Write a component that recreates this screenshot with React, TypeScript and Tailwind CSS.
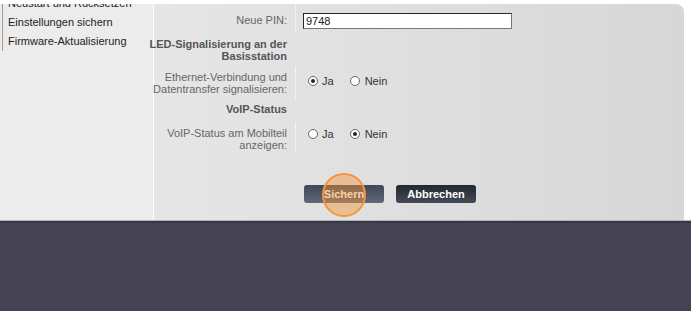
const menu = ["Neustart und Rücksetzen", "Einstellungen sichern", "Firmware-Aktualisierung"];

export default function App() {
  return <div className="h-[311px] w-[691px] overflow-hidden bg-white font-['Liberation_Sans',Arial,sans-serif] text-[11px]">
    <div className="pt-[4px] pr-[7px]">
      <div className="flex h-[216px] overflow-hidden rounded-tr-[8px]">
        <aside className="w-[153px] shrink-0 bg-[#ececec] pl-[2px]">
          <ul className="-mt-[10px] border-l border-[#9c9c9c] pl-[5px] text-[#222]">
            {menu.map((item) => <li key={item} className="h-[19px] leading-[19px]">{item}</li>)}
          </ul>
        </aside>
        <main className="flex-1 border-l border-white bg-linear-to-r from-[#e6e6e6] to-[#d7d7d7] pt-[1px]">
          <div className="flex h-[27px]">
            <Label className="items-start pt-[9px]">Neue PIN:</Label>
            <Value className="pt-[8px]"><input defaultValue="9748" className="h-[16px] w-[209px] border border-[#777] border-t-[#262626] border-l-[#262626] bg-white px-[2px] text-[11px] text-[#222] outline-none" /></Value>
          </div>
          <Heading className="mt-[6px]">LED-Signalisierung an der<br />Basisstation</Heading>
          <div className="mt-[4px] flex h-[33px]">
            <Label>Ethernet-Verbindung und<br />Datentransfer signalisieren:</Label>
            <Value className="flex items-center pb-[3px]"><Radios value="ja" /></Value>
          </div>
          <Heading className="mt-[4px]">VoIP-Status</Heading>
          <div className="mt-[7px] flex h-[30px]">
            <Label className="pt-[3px]">VoIP-Status am Mobilteil<br />anzeigen:</Label>
            <Value className="flex items-center pb-[6px]"><Radios value="nein" /></Value>
          </div>
          <div className="mt-[33px] flex gap-[12px] pl-[150px]">
            <button className="relative h-[18px] w-[80px] rounded-[3px] bg-linear-to-b from-[#3d4756] to-[#5f6b7b] text-[11px] font-bold text-white">
              Sichern
              <span className="absolute -top-[12px] left-[18px] h-[44px] w-[44px] rounded-full border-2 border-[#f7943a] bg-[#f7943a]/45" />
            </button>
            <button className="h-[18px] w-[80px] rounded-[3px] bg-linear-to-b from-[#232830] to-[#434b57] text-[11px] font-bold text-white">Abbrechen</button>
          </div>
        </main>
      </div>
    </div>
    <div className="h-[91px] border-t border-[#b3b3b3] bg-[#454353]">
      <div className="h-[2px] bg-[#383746]" />
    </div>
  </div>;
}

function Label({ children, className = "" }: { children: React.ReactNode; className?: string }) {
  return <div className={`flex w-[141px] shrink-0 items-center justify-end whitespace-nowrap pr-[8px] text-right leading-[12px] text-[#666] ${className}`}><div>{children}</div></div>;
}

function Value({ children, className = "" }: { children: React.ReactNode; className?: string }) {
  return <div className={`border-l border-[#f3f3f3] pl-[7px] ${className}`}>{children}</div>;
}

function Heading({ children, className = "" }: { children: React.ReactNode; className?: string }) {
  return <div className={`flex w-[141px] justify-end whitespace-nowrap pr-[8px] text-right font-bold leading-[12px] text-[#555] ${className}`}><div>{children}</div></div>;
}

function Radios({ value }: { value: "ja" | "nein" }) {
  return <div className="flex items-center text-[#333]">
    <Dot on={value === "ja"} className="ml-[5px]" />
    <span className="ml-[4px]">Ja</span>
    <Dot on={value === "nein"} className="ml-[16px]" />
    <span className="ml-[5px]">Nein</span>
  </div>;
}

function Dot({ on, className = "" }: { on: boolean; className?: string }) {
  return <span className={`flex h-[10px] w-[10px] items-center justify-center rounded-full border border-[#666] bg-white ${className}`}>
    {on && <span className="h-[4px] w-[4px] rounded-full bg-[#222]" />}
  </span>;
}
